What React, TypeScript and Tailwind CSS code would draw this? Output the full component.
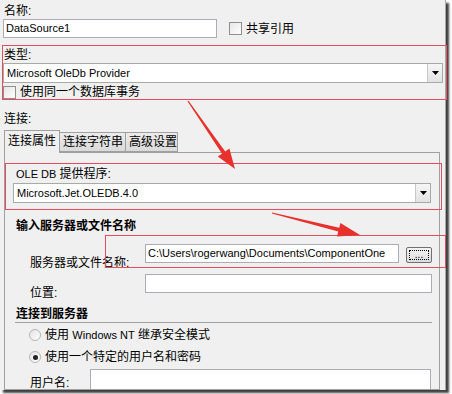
import React from 'react';

const latin = 'text-[11px]';

function Checkbox({ checked = false }: { checked?: boolean }) {
  return (
    <div className="w-[13px] h-[13px] border border-[#8e8f8f] bg-gradient-to-br from-[#e6e6e6] to-white shrink-0">
      {checked && <div className="m-[2px] w-[7px] h-[7px] bg-[#333]" />}
    </div>
  );
}

function Radio({ checked = false }: { checked?: boolean }) {
  return (
    <div className="w-[12px] h-[12px] rounded-full border border-[#b5b5b5] bg-gradient-to-br from-[#e4e4e4] to-white flex items-center justify-center shrink-0">
      {checked && <div className="w-[5px] h-[5px] rounded-full bg-[#222]" />}
    </div>
  );
}

function Combo({ value, width }: { value: string; width: string }) {
  return (
    <div className={`${width} h-[20px] border border-[#a9a9a9] bg-white flex items-center`}>
      <div className={`flex-1 pl-[3px] ${latin} leading-[18px]`}>{value}</div>
      <div className="w-[15px] h-[18px] border-l border-[#c9c9c9] bg-gradient-to-b from-[#f6f6f6] to-[#e2e2e2] flex items-center justify-center">
        <svg width="7" height="4" viewBox="0 0 7 4">
          <path d="M0 0h7L3.5 4z" fill="#000" />
        </svg>
      </div>
    </div>
  );
}

function TextBox({ value = '', width }: { value?: string; width: string }) {
  return (
    <div className={`${width} h-[19px] border border-[#abadb3] bg-white flex items-center pl-[2px] ${latin} shrink-0`}>
      {value}
    </div>
  );
}

function Arrows() {
  return (
    <svg className="absolute left-0 top-0 pointer-events-none" width="452" height="394">
      <polygon
        points="187.5,101.3 222,153.7 217.8,156.6 235,169 229.4,148.6 225.2,151.5 188.5,100.7"
        fill="#e8312c"
      />
      <polygon
        points="271.9,213.6 338.2,231.6 337,236.5 360,235 340.4,222.9 339.2,227.8 272.1,212.4"
        fill="#e8312c"
      />
    </svg>
  );
}

export default function App() {
  return (
    <div
      className="w-[452px] h-[394px] bg-white relative overflow-hidden text-[12px] text-black"
      style={{ fontFamily: '"Liberation Sans", "Noto Sans CJK SC", sans-serif' }}
    >
      <div className="w-[446px] h-[390px] bg-[#f0f0f0] border-r border-[#a9a9a9] shadow-[3px_3px_2px_rgba(0,0,0,0.75)] flex flex-col pl-[3px] pt-[4px]">
        <div className="h-[15px] leading-[15px] pl-[1px]">名称:</div>
        <div className="flex items-center">
          <TextBox value="DataSource1" width="w-[214px]" />
          <div className="flex items-center ml-[12px] gap-[4px]">
            <Checkbox />
            <span>共享引用</span>
          </div>
        </div>

        <div className="mt-[9px] h-[16px] leading-[16px] pl-[1px]">类型:</div>
        <Combo value="Microsoft OleDb Provider" width="w-[440px]" />
        <div className="mt-[2px] h-[14px] flex items-center gap-[4px]">
          <Checkbox />
          <span>使用同一个数据库事务</span>
        </div>

        <div className="mt-[12px] h-[16px] leading-[16px] pl-[1px]">连接:</div>

        <div className="mt-[3px] ml-[1px] flex items-end h-[22px]">
          <div className="relative z-10 h-[23px] -mb-[1px] w-[56px] border border-b-0 border-[#a0a0a0] bg-[#f0f0f0] pl-[3px] leading-[21px]">
            连接属性
          </div>
          <div className="h-[20px] w-[66px] border border-l-0 border-[#a0a0a0] bg-gradient-to-b from-[#ececec] to-[#dadada] pl-[3px] leading-[18px]">
            连接字符串
          </div>
          <div className="h-[20px] w-[52px] border border-l-0 border-[#a0a0a0] bg-gradient-to-b from-[#ececec] to-[#dadada] pl-[3px] leading-[18px]">
            高级设置
          </div>
        </div>

        <div className="ml-[1px] w-[436px] h-[238px] border border-[#a0a0a0] overflow-hidden flex flex-col">
          <div className="mt-[13px] pl-[11px] h-[16px] leading-[16px]">
            <span className={latin}>OLE DB </span>提供程序:
          </div>
          <div className="mt-[1px] ml-[8px]">
            <Combo value="Microsoft.Jet.OLEDB.4.0" width="w-[418px]" />
          </div>

          <div className="mt-[15px] pl-[11px] h-[16px] leading-[16px] font-bold">输入服务器或文件名称</div>

          <div className="mt-[10px] flex h-[19px] pl-[25px]">
            <div className="w-[115px] mt-[11px] h-[16px] leading-[16px]">服务器或文件名称:</div>
            <TextBox value="C:\Users\rogerwang\Documents\ComponentOne" width="w-[254px]" />
            <div className="ml-[7px] mt-[3px] w-[26px] h-[16px] rounded-[2px] border border-[#707070] bg-gradient-to-b from-[#f4f4f4] to-[#dcdcdc] p-[2px]">
              <div className="w-full h-full border border-dotted border-black flex items-end justify-center text-[10px] leading-[8px]">
                ...
              </div>
            </div>
          </div>

          <div className="mt-[11px] flex h-[19px] pl-[25px]">
            <div className="w-[115px] mt-[11px] h-[16px] leading-[16px]">位置:</div>
            <TextBox width="w-[287px]" />
          </div>

          <div className="mt-[14px] pl-[11px] h-[15px] leading-[15px] font-bold">连接到服务器</div>
          <div className="ml-[10px] w-[417px] h-px bg-[#a0a0a0]" />

          <div className="mt-[5px] h-[14px] flex items-center pl-[24px] gap-[4px]">
            <Radio />
            <span>
              使用 <span className={latin}>Windows NT</span> 继承安全模式
            </span>
          </div>
          <div className="mt-[8px] h-[14px] flex items-center pl-[24px] gap-[4px]">
            <Radio checked />
            <span>使用一个特定的用户名和密码</span>
          </div>

          <div className="mt-[5px] flex h-[20px] pl-[25px]">
            <div className="w-[60px] mt-[6px] h-[16px] leading-[16px]">用户名:</div>
            <div className="w-[341px] h-[21px] border border-[#abadb3] bg-white" />
          </div>
        </div>
      </div>

      <div className="absolute left-[2px] top-[45px] w-[445px] h-[55px] border border-[#e34d5f] pointer-events-none" />
      <div className="absolute left-[5px] top-[163px] w-[437px] h-[47px] border border-[#e34d5f] pointer-events-none" />
      <div className="absolute left-[105px] top-[235px] w-[341px] h-[33px] border border-[#e34d5f] pointer-events-none" />
      <Arrows />
    </div>
  );
}
